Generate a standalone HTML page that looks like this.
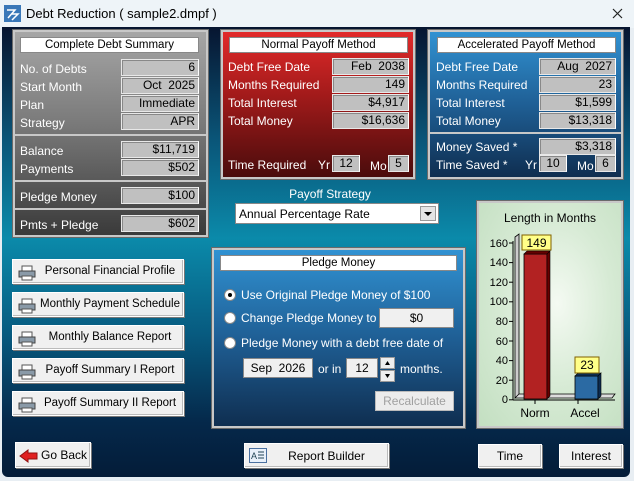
<!DOCTYPE html>
<html><head><meta charset="utf-8"><style>
*{box-sizing:border-box;margin:0;padding:0}
body{width:634px;height:481px;background:#e8eef3;position:relative;overflow:hidden;font-family:"Liberation Sans",sans-serif;font-size:12px}
.a{position:absolute}
#tb{left:0;top:0;width:634px;height:28px;background:#eef4f8}
#body{left:2px;top:27px;width:628px;height:450px;border-radius:0 0 6px 6px;background:linear-gradient(180deg,#071530 0%,#0a5578 25%,#0b8aaa 47%,#075b80 68%,#05284a 88%,#041c38 100%)}
.panel{position:absolute;border:2px solid #c8c8c8;box-shadow:0 0 0 1px #6a6a6a}
.ttl{position:absolute;background:#fff;border:1px solid #888;color:#000;text-align:center;font-size:11.5px;line-height:14px;height:16px}
.lbl{position:absolute;color:#fff;font-size:12px;line-height:16px}
.val{position:absolute;background:#c0c0c0;border:1px solid #e8e8e8;border-right-color:#fff;box-shadow:inset 1px 1px 0 #888;color:#000;text-align:right;padding-right:3px;font-size:12px;line-height:14px;height:17px}
.vc{text-align:center;padding:0}
.sep{position:absolute;left:0;right:0;height:2px;background:#c8c8c8}
.btn{position:absolute;background:#f0f0f0;border:1px solid #fff;box-shadow:1px 1px 0 #777,inset -1px -1px 0 #bbb;color:#000;font-size:12px;line-height:23px;text-align:center}
.lb{padding-left:24px;font-size:11.5px}
.pr{position:absolute;left:5px;top:5px}
.rad{position:absolute;width:12px;height:12px;border-radius:50%;background:#fff;border:1px solid #888}
</style></head><body>
<div class="a" id="tb">
 <svg class="a" style="left:4px;top:5px" width="17" height="17"><rect width="17" height="17" fill="#3a78b8"/><path d="M3 5h8l-7 8M7 9h7l-6 6" stroke="#fff" stroke-width="1.5" fill="none"/></svg>
 <div class="a" style="left:26px;top:6px;font-size:13px;color:#000">Debt Reduction ( sample2.dmpf )</div>
 <svg class="a" style="left:612px;top:8px" width="11" height="11"><path d="M1 1L10 10M10 1L1 10" stroke="#222" stroke-width="1.2"/></svg>
</div>
<div class="a" id="body"></div>

<div class="panel" style="left:13px;top:30px;width:195px;height:207px;background:linear-gradient(180deg,#a6a6a6 0%,#7a7a7a 45%,#3a3a3a 100%)">
 <div class="ttl" style="left:5px;top:5px;width:179px">Complete Debt Summary</div>
 <div class="lbl" style="left:5px;top:29px">No. of Debts</div><div class="val" style="left:106px;top:27px;width:78px">6</div>
 <div class="lbl" style="left:5px;top:47px">Start Month</div><div class="val" style="left:106px;top:45px;width:78px">Oct&nbsp; 2025</div>
 <div class="lbl" style="left:5px;top:65px">Plan</div><div class="val" style="left:106px;top:63px;width:78px">Immediate</div>
 <div class="lbl" style="left:5px;top:83px">Strategy</div><div class="val" style="left:106px;top:81px;width:78px">APR</div>
 <div class="sep" style="top:102px"></div>
 <div class="lbl" style="left:5px;top:111px">Balance</div><div class="val" style="left:106px;top:109px;width:78px">$11,719</div>
 <div class="lbl" style="left:5px;top:129px">Payments</div><div class="val" style="left:106px;top:127px;width:78px">$502</div>
 <div class="sep" style="top:148px"></div>
 <div class="lbl" style="left:5px;top:157px">Pledge Money</div><div class="val" style="left:106px;top:155px;width:78px">$100</div>
 <div class="sep" style="top:176px"></div>
 <div class="lbl" style="left:5px;top:185px">Pmts + Pledge</div><div class="val" style="left:106px;top:183px;width:78px">$602</div>
</div>

<div class="panel" style="left:221px;top:30px;width:194px;height:149px;background:linear-gradient(180deg,#e22a2a 0%,#a01a1a 45%,#4a0c0c 100%)">
 <div class="ttl" style="left:6px;top:5px;width:179px">Normal Payoff Method</div>
 <div class="lbl" style="left:5px;top:27px">Debt Free Date</div><div class="val" style="left:109px;top:26px;width:77px">Feb&nbsp; 2038</div>
 <div class="lbl" style="left:5px;top:45px">Months Required</div><div class="val" style="left:109px;top:44px;width:77px">149</div>
 <div class="lbl" style="left:5px;top:63px">Total Interest</div><div class="val" style="left:109px;top:62px;width:77px">$4,917</div>
 <div class="lbl" style="left:5px;top:81px">Total Money</div><div class="val" style="left:109px;top:80px;width:77px">$16,636</div>
 <div class="lbl" style="left:5px;top:125px">Time Required</div>
 <div class="lbl" style="left:95px;top:125px">Yr</div><div class="val vc" style="left:109px;top:123px;width:28px">12</div>
 <div class="lbl" style="left:147px;top:126px">Mo</div><div class="val vc" style="left:165px;top:123px;width:21px">5</div>
</div>

<div class="panel" style="left:428px;top:30px;width:195px;height:149px;background:linear-gradient(180deg,#3192d2 0%,#1f5f95 50%,#0f2e50 100%)">
 <div class="ttl" style="left:7px;top:5px;width:179px">Accelerated Payoff Method</div>
 <div class="lbl" style="left:6px;top:27px">Debt Free Date</div><div class="val" style="left:109px;top:26px;width:77px">Aug&nbsp; 2027</div>
 <div class="lbl" style="left:6px;top:45px">Months Required</div><div class="val" style="left:109px;top:44px;width:77px">23</div>
 <div class="lbl" style="left:6px;top:63px">Total Interest</div><div class="val" style="left:109px;top:62px;width:77px">$1,599</div>
 <div class="lbl" style="left:6px;top:81px">Total Money</div><div class="val" style="left:109px;top:80px;width:77px">$13,318</div>
 <div class="sep" style="top:100px"></div>
 <div class="lbl" style="left:6px;top:107px">Money Saved *</div><div class="val" style="left:109px;top:106px;width:77px">$3,318</div>
 <div class="lbl" style="left:6px;top:125px">Time Saved *</div>
 <div class="lbl" style="left:95px;top:125px">Yr</div><div class="val vc" style="left:109px;top:123px;width:28px">10</div>
 <div class="lbl" style="left:147px;top:126px">Mo</div><div class="val vc" style="left:165px;top:123px;width:21px">6</div>
</div>

<div class="lbl" style="left:228px;top:186px;width:204px;text-align:center">Payoff Strategy</div>
<div class="a" style="left:235px;top:203px;width:204px;height:21px;background:#fff;border:1px solid #888"><div class="a" style="left:3px;top:3px;color:#000">Annual Percentage Rate</div>
 <div class="a" style="left:184px;top:2px;width:16px;height:15px;background:#e4e4e4;border:1px solid #999"><svg width="14" height="13"><path d="M3 5h8l-4 4z" fill="#000"/></svg></div></div>

<div class="btn lb" style="left:12px;top:259px;width:172px;height:25px">PRNPersonal Financial Profile</div>
<div class="btn lb" style="left:12px;top:292px;width:172px;height:25px">PRNMonthly Payment Schedule</div>
<div class="btn lb" style="left:12px;top:325px;width:172px;height:25px">PRNMonthly Balance Report</div>
<div class="btn lb" style="left:12px;top:358px;width:172px;height:25px">PRNPayoff Summary I Report</div>
<div class="btn lb" style="left:12px;top:391px;width:172px;height:25px">PRNPayoff Summary II Report</div>

<div class="panel" style="left:212px;top:248px;width:253px;height:180px;background:linear-gradient(180deg,#3192d2 0%,#1f5f95 50%,#0f2e50 100%)">
 <div class="ttl" style="left:6px;top:5px;width:237px">Pledge Money</div>
 <div class="rad" style="left:10px;top:39px"><div class="a" style="left:3px;top:3px;width:4px;height:4px;border-radius:50%;background:#000"></div></div>
 <div class="lbl" style="left:27px;top:37px">Use Original Pledge Money of $100</div>
 <div class="rad" style="left:10px;top:62px"></div>
 <div class="lbl" style="left:27px;top:60px">Change Pledge Money to</div>
 <div class="a" style="left:165px;top:58px;width:75px;height:20px;background:#f0f0f0;border:1px solid #888;text-align:center;line-height:18px;color:#000">$0</div>
 <div class="rad" style="left:10px;top:87px"></div>
 <div class="lbl" style="left:27px;top:85px">Pledge Money with a debt free date of</div>
 <div class="a" style="left:29px;top:108px;width:70px;height:20px;background:#f0f0f0;border:1px solid #888;text-align:center;line-height:18px;color:#000">Sep&nbsp; 2026</div>
 <div class="lbl" style="left:104px;top:111px">or in</div>
 <div class="a" style="left:132px;top:108px;width:32px;height:20px;background:#f0f0f0;border:1px solid #888;text-align:center;line-height:18px;color:#000">12</div>
 <div class="a" style="left:166px;top:107px;width:15px;height:12px;background:#eee;border:1px solid #999"><svg width="13" height="10" class="a"><path d="M4 7h5l-2.5-4z" fill="#000"/></svg></div>
 <div class="a" style="left:166px;top:120px;width:15px;height:12px;background:#eee;border:1px solid #999"><svg width="13" height="10" class="a"><path d="M4 3h5l-2.5 4z" fill="#000"/></svg></div>
 <div class="lbl" style="left:186px;top:111px">months.</div>
 <div class="a" style="left:161px;top:141px;width:79px;height:20px;background:#ececec;border:1px solid #bbb;text-align:center;line-height:18px;color:#a0a0a0">Recalculate</div>
</div>

<div class="panel" style="left:477px;top:201px;width:146px;height:227px;background:radial-gradient(ellipse at 55% 45%,#f4faf2 0%,#d6ead4 50%,#c3dfc1 100%)">
 <div class="a" style="left:0;top:8px;width:142px;text-align:center;color:#000;font-size:12px">Length in Months</div>
 <svg class="a" style="left:0;top:0" width="142" height="223" font-family="Liberation Sans" font-size="11">
  <path d="M36 195V34l4-3v161z" fill="#ccc" stroke="#000" stroke-width="0.8"/>
  <path d="M36 195h97l3-4H40z" fill="#ddd" stroke="#000" stroke-width="0.8"/>
  <line x1="34" y1="38" x2="34" y2="197" stroke="#000"/>
  <line x1="34" y1="197" x2="136" y2="197" stroke="#000"/>
  <g stroke="#000"><line x1="30" y1="40" x2="34" y2="40"/><line x1="30" y1="59.6" x2="34" y2="59.6"/><line x1="30" y1="79.2" x2="34" y2="79.2"/><line x1="30" y1="98.8" x2="34" y2="98.8"/><line x1="30" y1="118.4" x2="34" y2="118.4"/><line x1="30" y1="138" x2="34" y2="138"/><line x1="30" y1="157.6" x2="34" y2="157.6"/><line x1="30" y1="177.2" x2="34" y2="177.2"/><line x1="30" y1="196.8" x2="34" y2="196.8"/><line x1="56" y1="197" x2="56" y2="201"/><line x1="99" y1="197" x2="99" y2="201"/></g>
  <g text-anchor="end" fill="#000"><text x="29" y="44">160</text><text x="29" y="63">140</text><text x="29" y="83">120</text><text x="29" y="102">100</text><text x="29" y="122">80</text><text x="29" y="142">60</text><text x="29" y="161">40</text><text x="29" y="181">20</text><text x="29" y="200">0</text></g>
  <rect x="45" y="51" width="23" height="145" fill="#b22222" stroke="#000" stroke-width="0.8"/>
  <path d="M45 51l3-3h23l-3 3zM68 51l3-3v145l-3 3z" fill="#600" stroke="#000" stroke-width="0.6"/>
  <rect x="96" y="173" width="23" height="23" fill="#2b6aa3" stroke="#000" stroke-width="0.8"/>
  <path d="M96 173l3-3h23l-3 3zM119 173l3-3v23l-3 3z" fill="#0d2c50" stroke="#000" stroke-width="0.6"/>
  <rect x="43" y="32" width="29" height="15" fill="#ffff88" stroke="#806000"/>
  <text x="57.5" y="44" text-anchor="middle" font-size="12">149</text>
  <rect x="96" y="154" width="24" height="16" fill="#ffff88" stroke="#806000"/>
  <text x="108" y="166" text-anchor="middle" font-size="12">23</text>
  <text x="56" y="214" text-anchor="middle" font-size="12">Norm</text>
  <text x="106" y="214" text-anchor="middle" font-size="12">Accel</text>
 </svg>
</div>

<div class="btn" style="left:15px;top:442px;width:76px;height:26px;line-height:24px;padding-left:22px"><svg class="a" style="left:3px;top:6px" width="20" height="14"><path d="M1 7L9 1v3h9v6H9v3z" fill="#e02020" stroke="#901010"/></svg>Go Back</div>
<div class="btn" style="left:244px;top:443px;width:145px;height:25px;line-height:25px;padding-left:20px"><svg class="a" style="left:4px;top:4px" width="18" height="15"><rect x="0.5" y="0.5" width="17" height="14" fill="#e8f0fa" stroke="#4a70a0"/><text x="2" y="11" font-size="9" font-family="Liberation Sans" fill="#245">A</text><path d="M9 4h6M9 7h6M9 10h6" stroke="#245"/></svg>Report Builder</div>
<div class="btn" style="left:478px;top:444px;width:64px;height:24px">Time</div>
<div class="btn" style="left:559px;top:444px;width:64px;height:24px">Interest</div>

<script>
document.querySelectorAll('.btn').forEach(b=>{b.innerHTML=b.innerHTML.replace('PRN','<svg class="pr" width="18" height="16"><rect x="4" y="1" width="10" height="5" fill="#fff" stroke="#555"/><rect x="1" y="6" width="16" height="6" fill="#8a9aa8" stroke="#444"/><rect x="4" y="11" width="10" height="4" fill="#fff" stroke="#555"/></svg>');});
</script>
</body></html>
